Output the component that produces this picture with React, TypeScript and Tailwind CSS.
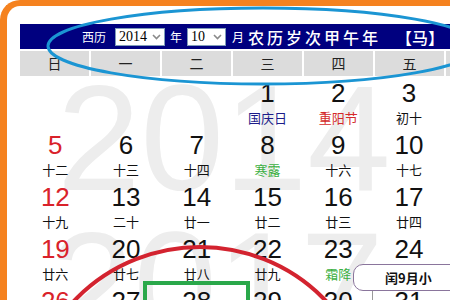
import React from 'react'

type Day = { d: string; l: string; red?: boolean; lc?: string }

const cn = '"Noto Sans CJK SC", sans-serif'

const weekdays = ['日', '一', '二', '三', '四', '五', '六']

const rows: (Day | null)[][] = [
  [null, null, null, { d: '1', l: '国庆日', lc: 'text-[#1c1c8a]' }, { d: '2', l: '重阳节', lc: 'text-[#d42a2a]' }, { d: '3', l: '初十' }, { d: '4', l: '十一' }],
  [{ d: '5', l: '十二', red: true }, { d: '6', l: '十三' }, { d: '7', l: '十四' }, { d: '8', l: '寒露', lc: 'text-[#3cb043]' }, { d: '9', l: '十六' }, { d: '10', l: '十七' }, { d: '11', l: '十八' }],
  [{ d: '12', l: '十九', red: true }, { d: '13', l: '二十' }, { d: '14', l: '廿一' }, { d: '15', l: '廿二' }, { d: '16', l: '廿三' }, { d: '17', l: '廿四' }, { d: '18', l: '廿五' }],
  [{ d: '19', l: '廿六', red: true }, { d: '20', l: '廿七' }, { d: '21', l: '廿八' }, { d: '22', l: '廿九' }, { d: '23', l: '霜降', lc: 'text-[#3cb043]' }, { d: '24', l: '初一' }, { d: '25', l: '初二' }],
  [{ d: '26', l: '初三', red: true }, { d: '27', l: '初四' }, { d: '28', l: '初五' }, { d: '29', l: '初六' }, { d: '30', l: '初七' }, { d: '31', l: '初八' }, { d: '1', l: '初九' }],
]

function FakeSelect({ value, w }: { value: string; w: string }) {
  return (
    <div className={`${w} h-[18px] bg-white border border-[#7f9db9] flex items-center justify-between pl-[3px] pr-[3px]`}>
      <span className="text-[14px] leading-none text-black" style={{ fontFamily: '"Liberation Serif", serif' }}>
        {value}
      </span>
      <svg width="9" height="6" viewBox="0 0 9 6" className="text-[#8a8a8a]">
        <path d="M1 1 L4.5 4.5 L8 1" fill="none" stroke="currentColor" strokeWidth="1.6" />
      </svg>
    </div>
  )
}

export default function App() {
  return (
    <div className="relative w-[450px] h-[300px] overflow-hidden bg-white">
      <div className="w-[600px] h-[400px] border-l-[7px] border-t-[6px] border-[#f5821f] rounded-tl-[20px] pl-[13px] pt-[18px]">
        <div className="w-[495px]">
          {/* header bar */}
          <div className="h-[25px] bg-[#00007f] flex items-center pl-[62px] text-white" style={{ fontFamily: cn }}>
            <span className="text-[12px] leading-none">西历</span>
            <div className="ml-[9px]"><FakeSelect value="2014" w="w-[50px]" /></div>
            <span className="ml-[5px] text-[12px] leading-none">年</span>
            <div className="ml-[5px]"><FakeSelect value="10" w="w-[39px]" /></div>
            <span className="ml-[6px] text-[12px] leading-none">月</span>
            <span className="ml-[4px] text-[16px] leading-none font-medium tracking-[3px]">农历岁次甲午年</span>
            <span className="ml-[15px] text-[16px] leading-none font-medium">【马】</span>
          </div>

          {/* weekday row */}
          <div className="mt-[2px] h-[25px] grid grid-cols-7 gap-x-[2px]" style={{ fontFamily: cn }}>
            {weekdays.map((w) => (
              <div key={w} className="bg-[#dcdcdc] flex items-center justify-center text-[14px] text-[#222]">
                {w}
              </div>
            ))}
          </div>

          {/* dates */}
          <div className="relative">
            <div
              className="absolute left-[37px] top-[-13px] text-[150px] leading-none text-[#ededed] select-none"
              style={{ fontFamily: '"Liberation Sans", Arial, sans-serif' }}
            >
              2014
            </div>
            <div
              className="absolute left-[30px] top-[134px] text-[150px] leading-none text-[#ededed] select-none"
              style={{ fontFamily: '"Liberation Sans", Arial, sans-serif' }}
            >
              2017
            </div>
            <div className="relative grid grid-cols-7">
              {rows.flat().map((c, i) => (
                <div key={i} className="h-[52px] pt-[3px] flex flex-col items-center">
                  {c && (
                    <>
                      <span
                        className={`text-[26px] leading-[28px] ${c.red ? 'text-[#d9222a]' : 'text-[#111]'}`}
                        style={{ fontFamily: '"Liberation Sans", Arial, sans-serif' }}
                      >
                        {c.d}
                      </span>
                      <span className={`mt-[3px] text-[13px] leading-[16px] ${c.lc ?? 'text-[#111]'}`} style={{ fontFamily: cn }}>
                        {c.l}
                      </span>
                    </>
                  )}
                </div>
              ))}
            </div>
          </div>
        </div>
      </div>

      {/* popup for leap month */}
      <div className="absolute left-[372px] top-[290px] w-px h-[10px] bg-[#9a9a9a]" />
      <div
        className="absolute left-[353px] top-[264px] w-[120px] h-[27px] bg-white border border-[#8a759c] rounded-[10px] flex items-center pl-[31px] text-[13px] font-bold text-[#111]"
        style={{ fontFamily: cn }}
      >
        闰9月小
      </div>

      {/* hand-drawn annotations */}
      <svg className="absolute inset-0 pointer-events-none" width="450" height="300" viewBox="0 0 450 300">
        <ellipse cx="263" cy="46" rx="215" ry="38" fill="none" stroke="#1b95d3" strokeWidth="3" />
        <circle cx="200" cy="421" r="174" fill="none" stroke="#d3232f" strokeWidth="4" />
        <rect x="145" y="283" width="103" height="40" fill="none" stroke="#2aa84a" strokeWidth="4" />
      </svg>
    </div>
  )
}
